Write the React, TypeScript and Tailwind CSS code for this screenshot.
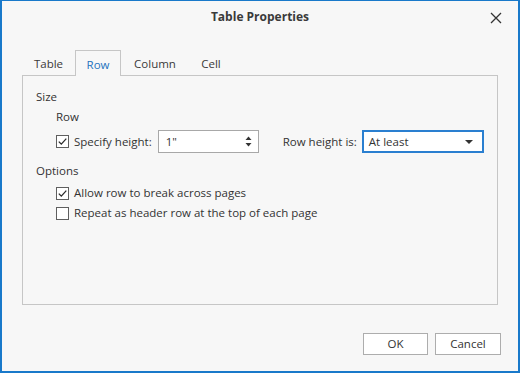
import React from 'react';

const FONT = { fontFamily: '"Open Sans", "Noto Sans", sans-serif' };

const tabs = [
  { label: 'Table', width: 'w-[53px]' },
  { label: 'Row', width: 'w-[46px]' },
  { label: 'Column', width: 'w-[68px]' },
  { label: 'Cell', width: 'w-[44px]' },
];

const CheckBox = ({ checked }: { checked: boolean }) => (
  <span className="flex h-[13px] w-[13px] shrink-0 items-center justify-center border border-[#5f5f5f] bg-white">
    {checked ? (
      <svg width="11" height="11" viewBox="0 0 11 11">
        <path d="M1.8 5.6 L4.3 8.1 L9.3 2.6" fill="none" stroke="#2b2b2b" strokeWidth="1.3" />
      </svg>
    ) : null}
  </span>
);

export default function App() {
  const active = 'Row';

  return (
    <div
      style={FONT}
      className="flex h-[373px] w-[520px] flex-col border-2 border-t border-[#1979ca] bg-[#f7f7f7] text-[11.5px] text-[#333333]"
    >
      {/* title bar */}
      <div className="relative flex h-[32px] items-center justify-center">
        <span className="text-[12px] font-bold text-[#3a3a3a]">Table Properties</span>
        <button type="button" aria-label="Close" className="absolute right-[16px] top-[10px] flex h-[13px] w-[13px] items-center justify-center">
          <svg width="12" height="12" viewBox="0 0 12 12">
            <path d="M1 1 L11 11 M11 1 L1 11" stroke="#333" strokeWidth="1.3" fill="none" />
          </svg>
        </button>
      </div>

      {/* tabs */}
      <div className="ml-[20px] mt-[17px] flex h-[25px] items-stretch">
        {tabs.map((tab) => {
          const isActive = tab.label === active;
          return (
            <div
              key={tab.label}
              className={`relative flex ${tab.width} items-center justify-center ${
                isActive
                  ? 'z-10 -mb-px border border-b-0 border-[#c6c6c6] bg-[#f7f7f7] pt-[2px] text-[#1e73be]'
                  : 'pt-[3px] text-[#3a3a3a]'
              }`}
            >
              {tab.label}
            </div>
          );
        })}
      </div>

      {/* panel */}
      <div className="ml-[20px] flex h-[230px] w-[476px] flex-col border border-[#c6c6c6] pl-[13px] pt-[12px]">
        <div className="flex h-[18px] items-center">Size</div>
        <div className="mt-[2px] flex h-[18px] items-center pl-[20px]">Row</div>

        <div className="mt-[4px] flex h-[23px] items-center pl-[20px]">
          <CheckBox checked />
          <span className="ml-[5px]">Specify height:</span>
          <div className="ml-[6px] flex h-[23px] w-[101px] items-center justify-between border border-[#a8a8a8] bg-white pl-[7px] pr-[6px]">
            <span>1"</span>
            <svg width="7" height="13" viewBox="0 0 7 13">
              <path d="M0.5 5 L3.5 1.5 L6.5 5 Z" fill="#333" />
              <path d="M0.5 8 L3.5 11.5 L6.5 8 Z" fill="#333" />
            </svg>
          </div>
          <span className="ml-[24px]">Row height is:</span>
          <div className="ml-[5px] flex h-[23px] w-[122px] items-center justify-between border-2 border-[#2a7fd0] bg-white pl-[5px] pr-[9px]">
            <span>At least</span>
            <svg width="8" height="4" viewBox="0 0 8 4">
              <path d="M0 0 L8 0 L4 4 Z" fill="#333" />
            </svg>
          </div>
        </div>

        <div className="mt-[9px] flex h-[18px] items-center">Options</div>
        <div className="mt-[4px] flex h-[18px] items-center gap-[5px] pl-[20px]">
          <CheckBox checked />
          <span>Allow row to break across pages</span>
        </div>
        <div className="mt-[2px] flex h-[18px] items-center gap-[5px] pl-[20px]">
          <CheckBox checked={false} />
          <span>Repeat as header row at the top of each page</span>
        </div>
      </div>

      {/* footer buttons */}
      <div className="mr-[17px] mt-[28px] flex justify-end gap-[7px]">
        <button type="button" className="h-[22px] w-[65px] border border-[#adadad] bg-white text-[#333]">
          OK
        </button>
        <button type="button" className="h-[22px] w-[66px] border border-[#adadad] bg-white text-[#333]">
          Cancel
        </button>
      </div>
    </div>
  );
}
